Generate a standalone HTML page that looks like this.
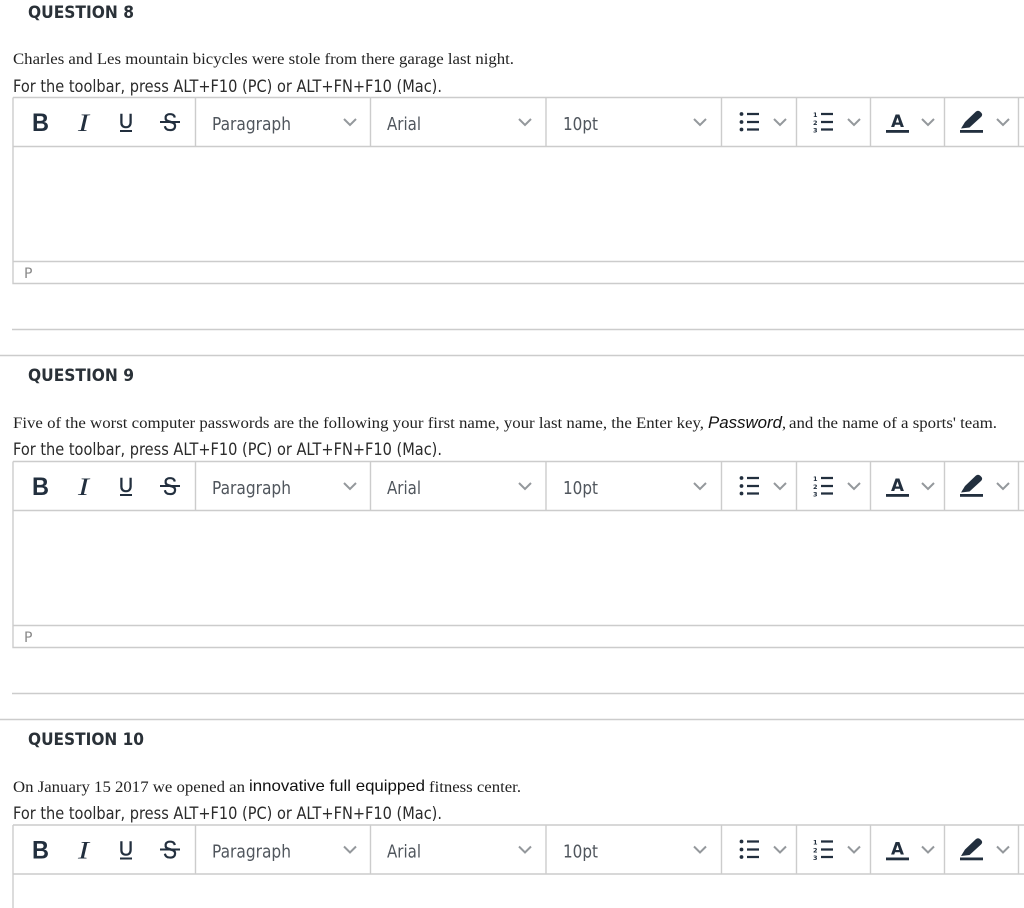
<!DOCTYPE html>
<html><head><meta charset="utf-8"><style>
html,body{margin:0;padding:0;background:#fff;width:1024px;height:908px;overflow:hidden}
svg{display:block}
.h{font:bold 17px "DejaVu Sans",sans-serif;fill:#2a3138}
.s{font:16px "Liberation Serif",serif;fill:#222}
.a{font:16px "Liberation Sans",sans-serif;fill:#111}
.o{font:16.500px "DejaVu Sans",sans-serif;fill:#2b2b2b}
.t{font:17.500px "DejaVu Sans",sans-serif;fill:#50565d}
.b{font:bold 25px "Liberation Sans",sans-serif;fill:#222f3e}
.i{font:italic 25px "Liberation Serif",serif;fill:#222f3e}
.u{font:20px "Liberation Sans",sans-serif;fill:#222f3e;stroke:#222f3e;stroke-width:.5}
.x{font:25px "Liberation Sans",sans-serif;fill:#222f3e;stroke:#222f3e;stroke-width:.3}
.f{font:bold 17px "DejaVu Sans",sans-serif;fill:#222f3e}
.n{font:bold 6.500px "DejaVu Sans",sans-serif;fill:#222f3e}
.p{font:14px "DejaVu Sans",sans-serif;fill:#888}
.l{stroke:#ccc;stroke-width:1.400;fill:none}
.c{stroke:#94989c;stroke-width:2;fill:none}
.k{fill:#222f3e}
</style></head><body>
<svg width="1024" height="908" viewBox="0 0 1024 908" xmlns="http://www.w3.org/2000/svg">
<defs>
<g id="ic">
<path class="l" d="M13 .5H1024M13 49.5H1024M13 .5V49.5M195.500 .5V49.5M370.500 .5V49.5M546 .5V49.5M721.500 .5V49.500M796.500 .5V49.500M870.500 .5V49.500M944.500 .5V49.500M1018.500 .5V49.500"/>
<path class="c" d="M344 22l6 6 6-6M519 22l6 6 6-6M694 22l6 6 6-6M774 22l6 6 6-6M848 22l6 6 6-6M922 22l6 6 6-6M997 22l6 6 6-6"/>
<rect class="k" x="120" y="33" width="12" height="2"/>
<rect class="k" x="160" y="24" width="20" height="2"/>
<circle class="k" cx="741.500" cy="17" r="1.900"/><circle class="k" cx="741.500" cy="25" r="1.900"/><circle class="k" cx="741.500" cy="32.500" r="1.900"/>
<path d="M747 17h12M747 25h12M747 32.500h12M821 17h12M821 25h12M821 32.500h12" stroke="#222f3e" stroke-width="2.200" fill="none"/>
<rect class="k" x="886" y="33" width="23" height="2.800"/>
<rect class="k" x="960" y="33" width="23" height="2.800"/>
<path class="k" d="M961 31.500L965 25 976 14.500q2-1.500 4 0l1.500 1.500q1.500 2-.5 4L969.500 30.500z"/>
</g>
</defs>

<text class="h" x="28" y="18" textLength="106" lengthAdjust="spacingAndGlyphs">QUESTION 8</text>
<text class="s" x="13" y="64" textLength="501" lengthAdjust="spacingAndGlyphs">Charles and Les mountain bicycles were stole from there garage last night.</text>
<text class="o" x="13" y="92" textLength="429" lengthAdjust="spacingAndGlyphs">For the toolbar, press ALT+F10 (PC) or ALT+FN+F10 (Mac).</text>
<g transform="translate(0,97)"><use href="#ic"/>
<text class="b" x="32" y="34" textLength="17" lengthAdjust="spacingAndGlyphs">B</text><text class="i" x="78" y="34" textLength="11" lengthAdjust="spacingAndGlyphs">I</text><text class="u" x="119" y="31" textLength="14" lengthAdjust="spacingAndGlyphs">U</text><text class="x" x="163" y="34" textLength="14" lengthAdjust="spacingAndGlyphs">S</text>
<text class="t" x="212" y="33" textLength="79" lengthAdjust="spacingAndGlyphs">Paragraph</text><text class="t" x="387" y="33" textLength="34" lengthAdjust="spacingAndGlyphs">Arial</text><text class="t" x="563" y="33" textLength="35" lengthAdjust="spacingAndGlyphs">10pt</text>
<text class="n" x="813" y="20">1</text><text class="n" x="813" y="28">2</text><text class="n" x="813" y="35.500">3</text>
<text class="f" x="891" y="30" textLength="13" lengthAdjust="spacingAndGlyphs">A</text>
<path class="l" d="M13 49.500V186.500H1024M13 164.500H1024"/>
<text class="p" x="24" y="181">P</text></g>
<path class="l" d="M12 329.500H1024M0 355.500H1024"/>

<text class="h" x="28" y="381" textLength="106" lengthAdjust="spacingAndGlyphs">QUESTION 9</text>
<text class="s" x="13" y="428" textLength="691" lengthAdjust="spacingAndGlyphs">Five of the worst computer passwords are the following your first name, your last name, the Enter key,</text>
<text class="a" x="708" y="428" style="font-style:italic;font-size:17px" textLength="74" lengthAdjust="spacingAndGlyphs">Password</text>
<text class="s" x="782" y="428">,</text>
<text class="s" x="789" y="428" textLength="208" lengthAdjust="spacingAndGlyphs">and the name of a sports' team.</text>
<text class="o" x="13" y="455" textLength="429" lengthAdjust="spacingAndGlyphs">For the toolbar, press ALT+F10 (PC) or ALT+FN+F10 (Mac).</text>
<g transform="translate(0,461)"><use href="#ic"/>
<text class="b" x="32" y="34" textLength="17" lengthAdjust="spacingAndGlyphs">B</text><text class="i" x="78" y="34" textLength="11" lengthAdjust="spacingAndGlyphs">I</text><text class="u" x="119" y="31" textLength="14" lengthAdjust="spacingAndGlyphs">U</text><text class="x" x="163" y="34" textLength="14" lengthAdjust="spacingAndGlyphs">S</text>
<text class="t" x="212" y="33" textLength="79" lengthAdjust="spacingAndGlyphs">Paragraph</text><text class="t" x="387" y="33" textLength="34" lengthAdjust="spacingAndGlyphs">Arial</text><text class="t" x="563" y="33" textLength="35" lengthAdjust="spacingAndGlyphs">10pt</text>
<text class="n" x="813" y="20">1</text><text class="n" x="813" y="28">2</text><text class="n" x="813" y="35.500">3</text>
<text class="f" x="891" y="30" textLength="13" lengthAdjust="spacingAndGlyphs">A</text>
<path class="l" d="M13 49.500V186.500H1024M13 164.500H1024"/>
<text class="p" x="24" y="181">P</text></g>
<path class="l" d="M12 693.500H1024M0 719.500H1024"/>

<text class="h" x="28" y="745" textLength="116" lengthAdjust="spacingAndGlyphs">QUESTION 10</text>
<text class="s" x="13" y="792" textLength="232" lengthAdjust="spacingAndGlyphs">On January 15 2017 we opened an</text>
<text class="a" x="249" y="791" textLength="176" lengthAdjust="spacingAndGlyphs">innovative full equipped</text>
<text class="s" x="429" y="792" textLength="92" lengthAdjust="spacingAndGlyphs">fitness center.</text>
<text class="o" x="13" y="819" textLength="429" lengthAdjust="spacingAndGlyphs">For the toolbar, press ALT+F10 (PC) or ALT+FN+F10 (Mac).</text>
<g transform="translate(0,824.500)"><use href="#ic"/>
<text class="b" x="32" y="34" textLength="17" lengthAdjust="spacingAndGlyphs">B</text><text class="i" x="78" y="34" textLength="11" lengthAdjust="spacingAndGlyphs">I</text><text class="u" x="119" y="31" textLength="14" lengthAdjust="spacingAndGlyphs">U</text><text class="x" x="163" y="34" textLength="14" lengthAdjust="spacingAndGlyphs">S</text>
<text class="t" x="212" y="33" textLength="79" lengthAdjust="spacingAndGlyphs">Paragraph</text><text class="t" x="387" y="33" textLength="34" lengthAdjust="spacingAndGlyphs">Arial</text><text class="t" x="563" y="33" textLength="35" lengthAdjust="spacingAndGlyphs">10pt</text>
<text class="n" x="813" y="20">1</text><text class="n" x="813" y="28">2</text><text class="n" x="813" y="35.500">3</text>
<text class="f" x="891" y="30" textLength="13" lengthAdjust="spacingAndGlyphs">A</text>
<path class="l" d="M13 49.500V90"/></g>
</svg>
</body></html>
